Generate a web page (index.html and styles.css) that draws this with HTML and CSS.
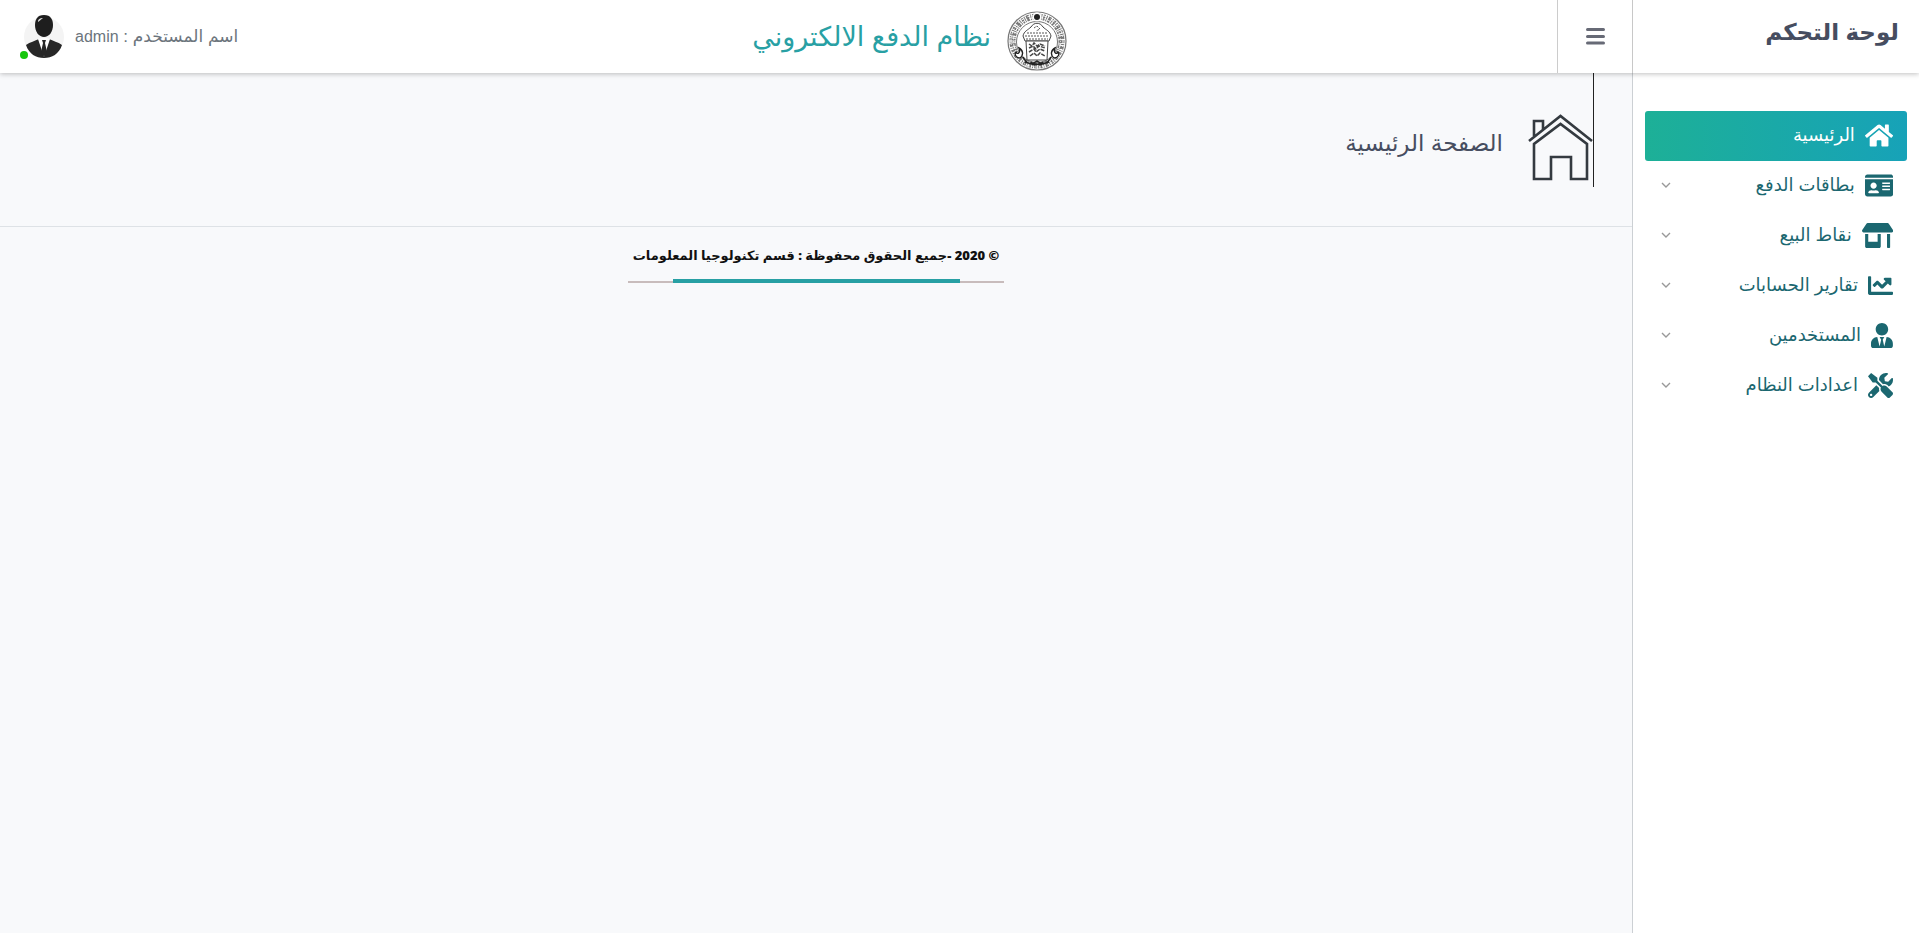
FILE: index.html
```html
<!DOCTYPE html>
<html lang="ar" dir="rtl">
<head>
  <meta charset="UTF-8">
  <meta name="viewport" content="width=device-width, initial-scale=1.0">
  <title>نظام الدفع الالكتروني</title>
  <link rel="stylesheet" href="styles.css">
</head>
<body>
  <header class="header">
    <div class="brand">لوحة التحكم</div>
    <button class="menu-toggle" type="button" aria-label="القائمة">
      <svg viewBox="0 0 19 17"><path d="M1.5 1.5h16M1.5 8.500h16M1.500 15h16"/></svg>
    </button>
    <div class="system">
      <svg class="seal" viewBox="0 0 60 60">
        <circle cx="30" cy="30" r="29" fill="#fff" stroke="#777" stroke-width="1.2"/>
        <circle cx="30" cy="30" r="24.500" fill="none" stroke="#777" stroke-width="6" stroke-dasharray="2 1 1 1 3 1 1 1"/>
        <circle cx="30" cy="30" r="26" fill="none" stroke="#fff" stroke-width="1" stroke-dasharray="3 2 1 2"/>
        <circle cx="30" cy="30" r="23.500" fill="none" stroke="#fff" stroke-width="1" stroke-dasharray="1 2 4 2"/>
        <circle cx="30" cy="31" r="20.500" fill="#fff" stroke="#777" stroke-width="1"/>
        <circle cx="30" cy="6" r="4.500" fill="#fff"/>
        <circle cx="30" cy="6" r="3" fill="#222"/>
        <path d="M16 25c1-5 5-6 8-9 3-5 9-5 12 0 3 3 7 4 8 9l-2 5H18z" fill="#fff" stroke="#444"/>
        <path d="M27 17l3-2 3 3-4 2M20 22h20M18 25h24M19 28h22" fill="none" stroke="#555" stroke-dasharray="2 1"/>
        <path d="M19 30h22l-1 19H20z" fill="#fff" stroke="#444"/>
        <path d="M22 33l3 2 2-3 3 3 3-2 5 2M22 37l4-2 3 3 3-3 6 2M22 41l5-3 2 3 4-3 5 2M23 45l4-3 3 3 3-3 5 3" fill="none" stroke="#444" stroke-width="1.500" stroke-dasharray="4 1"/>
        <path d="M12 37c4 2 5 7 1 10-4 0-6-4-4-6 1 3 5 1 3-4zM48 37c-4 2-5 7-1 10 4 0 6-4 4-6-1 3-5 1-3-4z" fill="#fff" stroke="#222" stroke-width="1.400"/>
        <path d="M16 46c4 8 9 8 14 4 5 4 10 4 14-4M18 51l10 3M42 51l-10 3M24 51c2 3 10 3 12 0" fill="none" stroke="#222" stroke-width="1.600"/>
      </svg>
      <h1 class="system-name">نظام الدفع الالكتروني</h1>
    </div>
    <div class="user">
      <span>اسم المستخدم : <span class="user-name">admin</span></span>
      <div class="avatar">
        <svg viewBox="0 0 40 44">
          <circle cx="20" cy="22" r="20" fill="#f4f4f4"/>
          <path d="M2 30c4-3 9-4 13-6h10c4 2 9 3 13 6-3 9-10 13-18 13S5 39 2 30z" fill="#272727"/>
          <path d="M14 24l4-1h4l4 1-6 18z" fill="#fff"/>
          <path d="M18 25h4l-1 3 2 9-3 5-3-5 2-9z" fill="#272727"/>
          <path d="M20 0c7 0 9 5 9 10 0 7-4 12-9 12s-9-5-9-12c0-5 2-10 9-10z" fill="#1e1e1e"/>
          <path d="M14 7c0-3 2-4 5-4-2 1-3 3-5 4z" fill="#ddd"/>
        </svg>
        <span class="status"></span>
      </div>
    </div>
  </header>

  <div class="layout">
    <nav class="sidebar">
      <a class="nav-item active" href="#">
        <svg class="nav-icon" viewBox="0 0 576 512"><path d="M280.37 148.26L96 300.11V464a16 16 0 0 0 16 16l112.06-.29a16 16 0 0 0 15.92-16V368a16 16 0 0 1 16-16h64a16 16 0 0 1 16 16v95.64a16 16 0 0 0 16 16.05L464 480a16 16 0 0 0 16-16V300L295.67 148.26a12.19 12.19 0 0 0-15.3 0zM571.6 251.47L488 182.56V44.05a12 12 0 0 0-12-12h-56a12 12 0 0 0-12 12v72.61L318.47 43a48 48 0 0 0-61 0L4.34 251.47a12 12 0 0 0-1.6 16.9l25.5 31A12 12 0 0 0 45.15 301l235.22-193.74a12.19 12.19 0 0 1 15.3 0L530.9 301a12 12 0 0 0 16.9-1.6l25.5-31a12 12 0 0 0-1.7-16.93z"/></svg>
        <span>الرئيسية</span>
      </a>
      <a class="nav-item" href="#">
        <svg class="nav-icon" viewBox="0 0 576 512"><path d="M528 32H48C21.5 32 0 53.5 0 80v16h576V80c0-26.500-21.500-48-48-48zM0 432c0 26.500 21.500 48 48 48h480c26.500 0 48-21.500 48-48V128H0v304zm352-232c0-4.400 3.600-8 8-8h144c4.400 0 8 3.600 8 8v16c0 4.400-3.600 8-8 8H360c-4.400 0-8-3.600-8-8v-16zm0 64c0-4.400 3.600-8 8-8h144c4.400 0 8 3.600 8 8v16c0 4.400-3.600 8-8 8H360c-4.400 0-8-3.600-8-8v-16zm0 64c0-4.400 3.600-8 8-8h144c4.400 0 8 3.600 8 8v16c0 4.400-3.600 8-8 8H360c-4.400 0-8-3.600-8-8v-16zM176 192c35.300 0 64 28.700 64 64s-28.700 64-64 64-64-28.700-64-64 28.700-64 64-64zM67.100 396.200C75.500 370.500 99.600 352 128 352h8.200c12.300 5.100 25.700 8 39.800 8s27.600-2.900 39.800-8h8.200c28.400 0 52.500 18.500 60.900 44.200 3.200 9.900-5.200 19.800-15.600 19.800H82.700c-10.400 0-18.800-10-15.600-19.800z"/></svg>
        <span>بطاقات الدفع</span>
        <svg class="chevron" viewBox="0 0 10 6"><path d="M1 1l4 4 4-4"/></svg>
      </a>
      <a class="nav-item" href="#">
        <svg class="nav-icon" viewBox="0 0 640 512"><path d="M320 384H128V224H64v256c0 17.700 14.300 32 32 32h256c17.700 0 32-14.300 32-32V224h-64v160zm314.600-241.800l-85.300-128c-6-8.900-16-14.200-26.700-14.200H117.400c-10.700 0-20.700 5.300-26.600 14.200l-85.300 128c-14.200 21.300 1 49.800 26.600 49.800H608c25.500 0 40.700-28.500 26.600-49.800zM512 496c0 8.800 7.200 16 16 16h32c8.800 0 16-7.200 16-16V224h-64v272z"/></svg>
        <span>نقاط البيع</span>
        <svg class="chevron" viewBox="0 0 10 6"><path d="M1 1l4 4 4-4"/></svg>
      </a>
      <a class="nav-item" href="#">
        <svg class="nav-icon" viewBox="0 0 512 512"><path d="M496 384H64V80c0-8.840-7.160-16-16-16H16C7.160 64 0 71.160 0 80v336c0 17.670 14.330 32 32 32h464c8.840 0 16-7.160 16-16v-32c0-8.840-7.160-16-16-16zM464 96H345.940c-21.380 0-32.090 25.850-16.970 40.970l32.400 32.400L288 242.750l-73.370-73.370c-12.500-12.500-32.760-12.500-45.250 0l-68.690 68.690c-6.250 6.250-6.250 16.380 0 22.630l22.620 22.620c6.250 6.250 16.380 6.250 22.630 0L192 237.250l73.370 73.370c12.500 12.500 32.760 12.500 45.250 0l96-96 32.400 32.400c15.120 15.120 40.970 4.410 40.970-16.970V112c.01-8.840-7.150-16-15.990-16z"/></svg>
        <span>تقارير الحسابات</span>
        <svg class="chevron" viewBox="0 0 10 6"><path d="M1 1l4 4 4-4"/></svg>
      </a>
      <a class="nav-item" href="#">
        <svg class="nav-icon" viewBox="0 0 448 512"><path d="M224 256c70.700 0 128-57.300 128-128S294.700 0 224 0 96 57.300 96 128s57.300 128 128 128zm95.800 32.600L272 480l-32-136 32-56h-96l32 56-32 136-47.800-191.400C56.900 292 0 350.300 0 422.400V464c0 26.500 21.500 48 48 48h352c26.500 0 48-21.500 48-48v-41.600c0-72.100-56.900-130.400-128.200-133.800z"/></svg>
        <span>المستخدمين</span>
        <svg class="chevron" viewBox="0 0 10 6"><path d="M1 1l4 4 4-4"/></svg>
      </a>
      <a class="nav-item" href="#">
        <svg class="nav-icon" viewBox="0 0 512 512"><path d="M501.100 395.700L384 278.600c-23.100-23.100-57.600-27.600-85.400-13.900L192 158.100V96L64 0 0 64l96 128h62.100l106.600 106.600c-13.600 27.800-9.200 62.300 13.900 85.400l117.100 117.100c14.600 14.600 38.200 14.600 52.700 0l52.700-52.700c14.500-14.600 14.500-38.200 0-52.700zM331.700 225c28.300 0 54.900 11 74.900 31l19.400 19.400c15.800-6.900 30.800-16.500 43.800-29.500 37.100-37.100 49.700-89.300 37.900-136.700-2.200-9-13.500-12.100-20.100-5.500l-74.400 74.400-67.900-11.300L334 98.900l74.400-74.400c6.600-6.600 3.400-17.900-5.700-20.200-47.400-11.700-99.600.9-136.600 37.900-28.500 28.500-41.900 66.100-41.200 103.600l82.100 82.100c8.100-1.900 16.500-2.900 24.700-2.900zm-103.900 82l-56.700-56.700L18.700 402.800c-25 25-25 65.500 0 90.500s65.500 25 90.500 0l123.600-123.600c-7.600-19.900-9.900-41.600-5-62.700zM64 472c-13.200 0-24-10.800-24-24 0-13.300 10.700-24 24-24s24 10.700 24 24c0 13.200-10.700 24-24 24z"/></svg>
        <span>اعدادات النظام</span>
        <svg class="chevron" viewBox="0 0 10 6"><path d="M1 1l4 4 4-4"/></svg>
      </a>
    </nav>

    <main class="content">
      <section class="page-title">
        <div class="page-icon">
          <svg viewBox="0 0 65 67"><path d="M1 27L32.500 2 64 27M6 30v35h17V43h20v22h16V30L32.500 10zM6 22V7h9v8"/></svg>
        </div>
        <h2>الصفحة الرئيسية</h2>
      </section>
      <footer class="footer">
        <p>© 2020 -جميع الحقوق محفوظة : قسم تكنولوجيا المعلومات</p>
        <div class="footer-line"><span></span></div>
      </footer>
    </main>
  </div>
</body>
</html>
```
FILE: styles.css
```css
* {
  box-sizing: border-box;
}
body {
  margin: 0;
  min-height: 100vh;
  display: flex;
  flex-direction: column;
  background: #f8f9fb;
  font-family: "Liberation Sans", "DejaVu Sans", sans-serif;
  color: #464d60;
}
h1, h2, p {
  margin: 0;
  font-weight: normal;
}
.header {
  height: 73px;
  display: flex;
  align-items: center;
  background: #fff;
  box-shadow: 0 1px 5px rgba(0, 0, 0, 0.25);
  position: relative;
  z-index: 1;
}
.brand {
  width: 287px;
  height: 100%;
  padding: 14px 20px;
  border-left: 1px solid #c8c8c8;
  font-size: 23px;
  line-height: 36px;
  font-weight: bold;
}
.menu-toggle {
  width: 75px;
  height: 100%;
  padding: 0;
  border: 0;
  border-left: 1px solid #ccc;
  background: none;
  cursor: pointer;
}
.menu-toggle svg {
  width: 19px;
  height: 17px;
  vertical-align: middle;
}
.menu-toggle path {
  stroke: #676a76;
  stroke-width: 3;
  stroke-linecap: round;
}
.system {
  flex: 1;
  display: flex;
  align-items: center;
  justify-content: center;
  gap: 16px;
  padding-left: 24px;
}
.seal {
  width: 60px;
  height: 60px;
  margin-top: 9px;
}
.system-name {
  font-size: 27px;
  line-height: 40px;
  color: #28a0a4;
}
.user {
  display: flex;
  align-items: center;
  gap: 11px;
  padding-left: 24px;
  font-size: 17px;
  color: #6c757d;
}
.user-name {
  font-size: 16px;
}
.avatar {
  position: relative;
  width: 40px;
  height: 44px;
}
.avatar svg {
  display: block;
}
.status {
  position: absolute;
  left: -4px;
  bottom: 0;
  width: 8px;
  height: 8px;
  border-radius: 50%;
  background: #16c60c;
}
.layout {
  flex: 1;
  display: flex;
}
.sidebar {
  width: 287px;
  padding: 38px 12px;
  border-left: 1px solid #ccd0d4;
  background: #fff;
}
.nav-item {
  display: flex;
  align-items: center;
  gap: 10px;
  height: 50px;
  padding: 0 14px 2px;
  border-radius: 3px;
  color: #1b6770;
  font-size: 18px;
  text-decoration: none;
}
.nav-item.active {
  color: #fff;
  background: linear-gradient(to right, #1db097, #17a2b8);
}
.nav-icon {
  height: 25px;
  fill: currentColor;
}
.chevron {
  width: 10px;
  height: 6px;
  margin-right: auto;
  margin-left: 2px;
  fill: none;
  stroke: #999;
  stroke-width: 1.4;
}
.content {
  flex: 1;
}
.page-title {
  height: 154px;
  display: flex;
  gap: 25px;
  padding-right: 38px;
  border-bottom: 1px solid #dee2e6;
}
.page-icon {
  height: 114px;
  padding-top: 41px;
  border-right: 1px solid #222;
}
.page-icon svg {
  display: block;
  width: 65px;
  height: 67px;
  fill: none;
  stroke: #343a40;
  stroke-width: 2.6;
}
.page-title h2 {
  padding-top: 50px;
  font-size: 23px;
  line-height: 40px;
}
.footer {
  display: flex;
  flex-direction: column;
  align-items: center;
  padding-top: 16px;
  color: #111;
}
.footer p {
  font-family: "Open Sans", "DejaVu Sans", sans-serif;
  font-size: 13px;
  line-height: 24px;
  font-weight: 800;
}
.footer-line {
  width: 376px;
  height: 4px;
  margin-top: 12px;
  display: flex;
  justify-content: center;
  background: linear-gradient(#c8bcbc, #c8bcbc) no-repeat 0 2px / 100% 2px;
}
.footer-line span {
  width: 287px;
  background: #28a0a4;
}
```
